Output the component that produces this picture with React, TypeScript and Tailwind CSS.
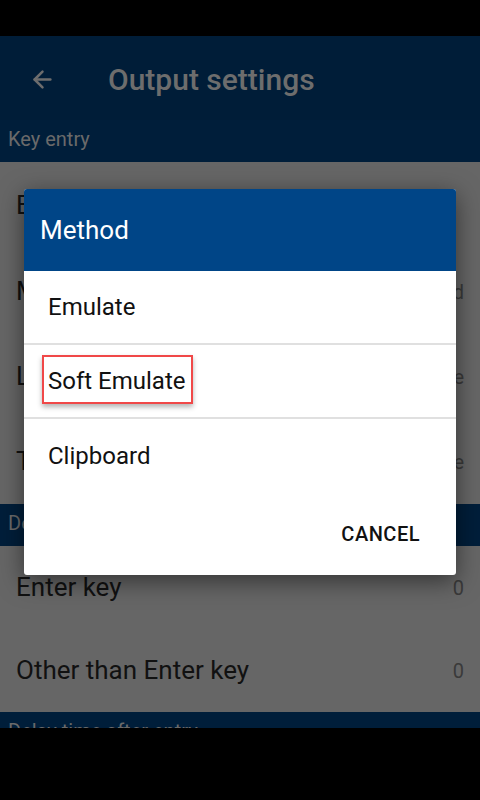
import { ArrowLeft } from "lucide-react";

const Row = ({ title, value, h }: { title: string; value?: string; h: string }) => {
    return (
        <div className={`shrink-0 flex items-center justify-between pl-4 pr-4 ${h}`}>
            <span className="text-[26px] text-[#111111]">{title}</span>
            {value && <span className="text-[20px] text-[#3a3a3a]">{value}</span>}
        </div>
    );
};

const Section = ({ label }: { label: string }) => {
    return (
        <div className="shrink-0 h-[42px] bg-[#001e3a] flex items-center pl-2 pb-[4px] text-[20px] text-[#6a6a6a]">
            {label}
        </div>
    );
};

const App = () => {
    return (
        <div
            className="relative w-[480px] h-[800px] bg-black overflow-hidden flex flex-col"
            style={{ fontFamily: "Roboto, 'Liberation Sans', sans-serif" }}
        >
            <div className="shrink-0 h-[36px] bg-black" />
            <div className="shrink-0 h-[84px] bg-[#001d38] flex items-center">
                <ArrowLeft className="ml-[29px] mt-[2px] text-[#6d6d6d]" size={27} strokeWidth={2.2} />
                <span className="ml-[52px] mt-[3px] text-[30px] font-medium text-[#6d6d6d]">Output settings</span>
            </div>
            <div className="shrink-0 h-[608px] bg-[#666666] overflow-hidden flex flex-col">
                <Section label="Key entry" />
                <Row title="Enable" h="h-[87px]" />
                <Row title="Method" value="Soft Emulated" h="h-[85px]" />
                <Row title="Language" value="Same" h="h-[85px]" />
                <Row title="Type" value="Same" h="h-[85px]" />
                <Section label="Delay time" />
                <Row title="Enter key" value="0" h="h-[83px]" />
                <Row title="Other than Enter key" value="0" h="h-[83px]" />
                <Section label="Delay time after entry" />
            </div>
            <div className="flex-1 bg-black" />

            <div className="absolute left-[24px] top-[189px] w-[432px] h-[386px] bg-white rounded-[3px] overflow-hidden shadow-[0_6px_24px_rgba(0,0,0,0.5)] flex flex-col">
                <div className="shrink-0 h-[82px] bg-[#004587] flex items-center pl-4 text-[26px] text-white">
                    Method
                </div>
                <div className="shrink-0 h-[74px] border-b-2 border-[#e0e0e0] flex items-center pl-6 text-[24px] text-[#111111]">
                    Emulate
                </div>
                <div className="shrink-0 h-[74px] border-b-2 border-[#e0e0e0] flex items-center pl-6 text-[24px] text-[#111111]">
                    Soft Emulate
                </div>
                <div className="shrink-0 h-[73px] flex items-center pl-6 text-[24px] text-[#111111]">
                    Clipboard
                </div>
                <div className="flex-1 flex items-center justify-end pr-9">
                    <span className="text-[20px] font-medium tracking-[0.5px] text-[#111111]">CANCEL</span>
                </div>
                <div className="absolute left-[18px] top-[166px] w-[151px] h-[49px] border-2 border-[#f04848] shadow-[0_3px_5px_rgba(0,0,0,0.3)]" />
            </div>
        </div>
    );
};

export default App;
